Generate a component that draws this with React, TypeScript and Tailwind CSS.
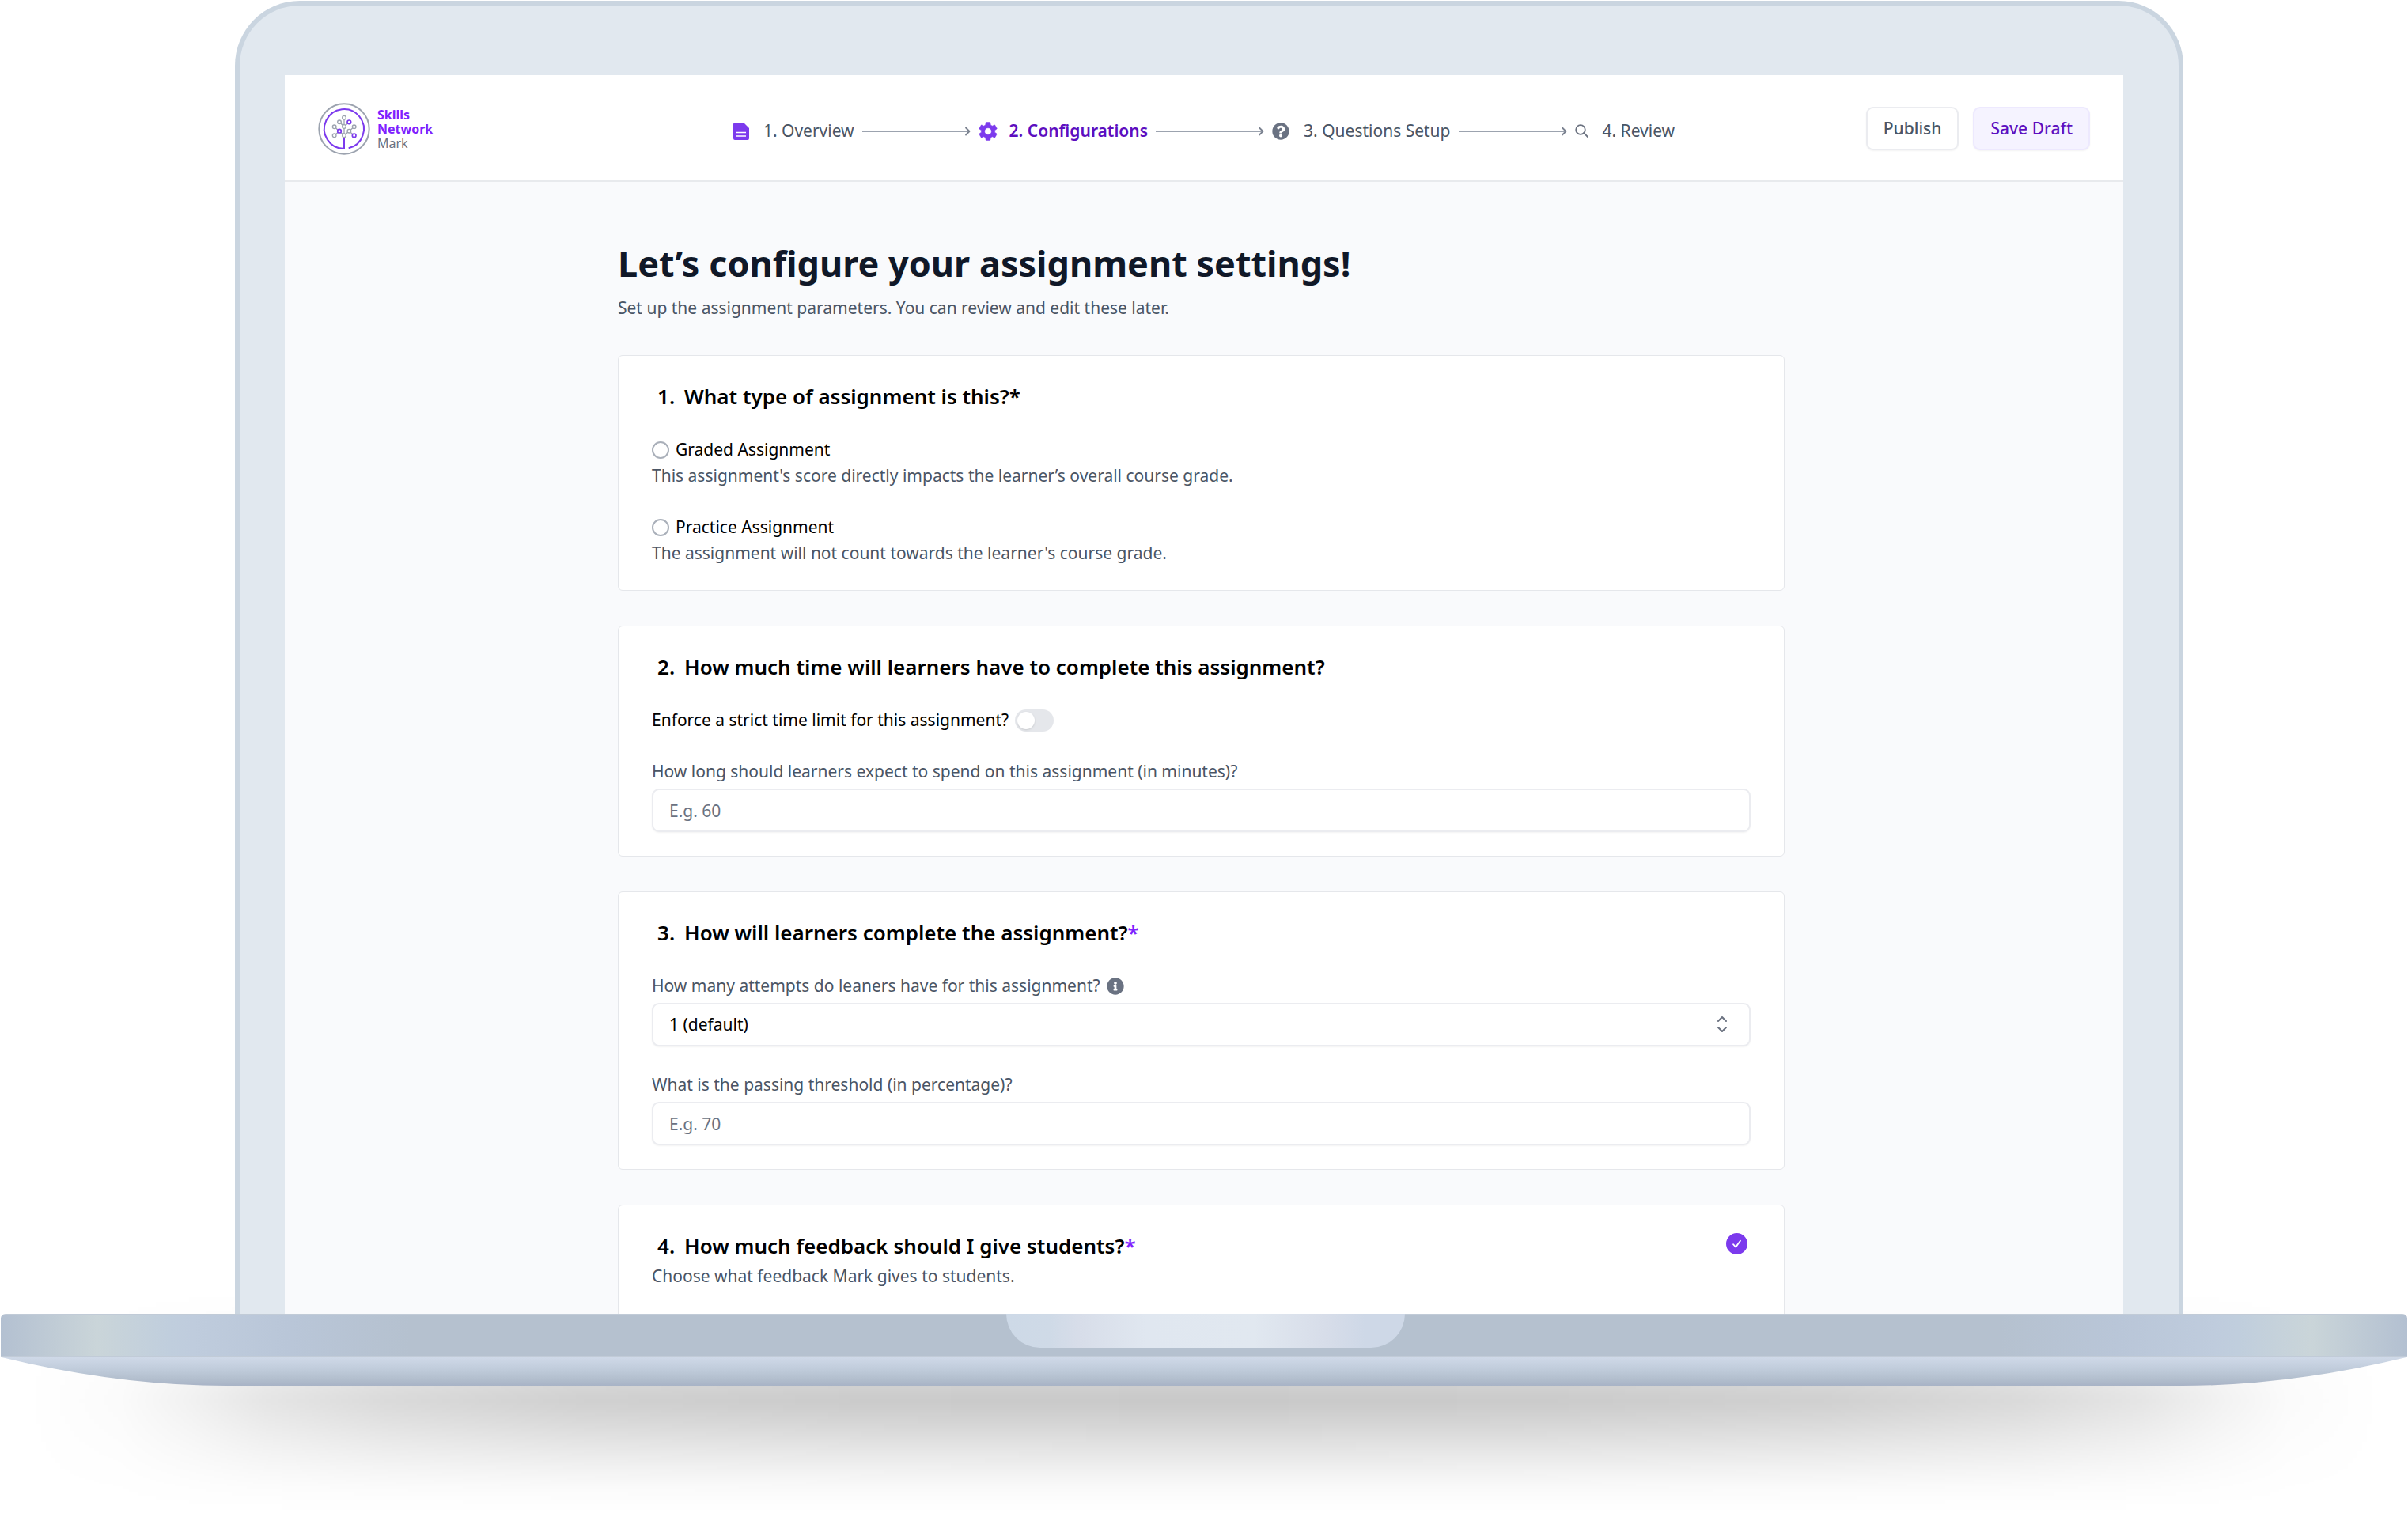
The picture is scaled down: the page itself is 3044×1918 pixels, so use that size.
import React, { useState } from "react";
import { FaInfoCircle, FaQuestionCircle } from "react-icons/fa";

const PURPLE = "#7c3aed";
const GRAY = "#9ca3af";

function Logo() {
  const grayNodes = [
    [464, 443],
    [446, 460],
    [427, 478],
    [464, 477],
    [502, 478],
    [483, 494],
    [427, 511],
    [464, 511],
  ];
  const purpleNodes = [
    [483, 460],
    [446, 494],
    [502, 511],
  ];
  return (
    <a href="#home" className="flex items-center gap-[9px]">
      <svg viewBox="365 387 198 198" className="size-[66px]" fill="none" aria-hidden="true">
        <circle cx="464" cy="486" r="95" stroke={GRAY} strokeWidth="6" />
        <path d="M464 516V561A75 75 0 1 1 481 559" stroke={PURPLE} strokeWidth="6" />
        <path
          d="M464 443V511M446 460L464 477L483 460M427 478L464 511L502 478M427 511L446 494M483 494L502 511"
          stroke={GRAY}
          strokeWidth="4"
        />
        {grayNodes.map(([x, y]) => (
          <circle key={`${x}-${y}`} cx={x} cy={y} r="7" fill="#fff" stroke={GRAY} strokeWidth="4" />
        ))}
        {purpleNodes.map(([x, y]) => (
          <circle key={`${x}-${y}`} cx={x} cy={y} r="7" fill="#fff" stroke={PURPLE} strokeWidth="5" />
        ))}
      </svg>
      <span className="flex flex-col text-[16px] leading-[18px]">
        <span className="font-bold text-violet-600">Skills</span>
        <span className="font-bold text-violet-600">Network</span>
        <span className="text-gray-500">Mark</span>
      </span>
    </a>
  );
}

function DocumentIcon() {
  return (
    <svg viewBox="0 0 20 22" className="h-[22px] w-[20px]" aria-hidden="true">
      <path d="M2 0H13L20 7V20A2 2 0 0 1 18 22H2A2 2 0 0 1 0 20V2A2 2 0 0 1 2 0Z" fill={PURPLE} />
      <path d="M4 12.5H16M4 17H16" stroke="#fff" strokeWidth="1.6" />
    </svg>
  );
}

function GearIcon() {
  return (
    <svg viewBox="2 2 20 20" className="size-[24px]" fill={PURPLE} aria-hidden="true">
      <path
        d="M19.14 12.94c.04-.3.06-.61.06-.94 0-.32-.02-.64-.07-.94l2.03-1.58a.49.49 0 0 0 .12-.61l-1.92-3.32a.488.488 0 0 0-.59-.22l-2.39.96c-.5-.38-1.03-.7-1.62-.94l-.36-2.54a.484.484 0 0 0-.48-.41h-3.84c-.24 0-.43.17-.47.41l-.36 2.54c-.59.24-1.13.57-1.62.94l-2.39-.96c-.22-.08-.47 0-.59.22L2.74 8.87c-.12.21-.08.47.12.61l2.03 1.58c-.05.3-.09.63-.09.94s.02.64.07.94l-2.03 1.58a.49.49 0 0 0-.12.61l1.92 3.32c.12.22.37.29.59.22l2.39-.96c.5.38 1.03.7 1.62.94l.36 2.54c.05.24.24.41.48.41h3.84c.24 0 .44-.17.47-.41l.36-2.54c.59-.24 1.13-.56 1.62-.94l2.39.96c.22.08.47 0 .59-.22l1.92-3.32c.12-.22.07-.47-.12-.61l-2.01-1.58zM12 15.6A3.6 3.6 0 1 1 12 8.4a3.6 3.6 0 0 1 0 7.2z"
        stroke={PURPLE}
        strokeWidth="0.4"
      />
    </svg>
  );
}

function SearchIcon() {
  return (
    <svg viewBox="0 0 17 17" className="size-[17px]" fill="none" stroke="#6b7280" strokeWidth="1.8" strokeLinecap="round" aria-hidden="true">
      <circle cx="7" cy="7" r="5.8" />
      <path d="M11.2 11.2L16 16" />
    </svg>
  );
}

function StepArrow() {
  return (
    <svg viewBox="0 0 137 12" className="h-[12px] w-[137px]" fill="none" stroke="#9ca3af" aria-hidden="true">
      <path d="M0 6H135" strokeWidth="2" />
      <path d="M131 1.5L135.5 6L131 10.5" stroke="#7b8290" strokeWidth="1.8" strokeLinecap="round" strokeLinejoin="round" />
    </svg>
  );
}

const steps = [
  { label: "1. Overview", icon: <DocumentIcon />, gap: "gap-[18px]" },
  { label: "2. Configurations", icon: <GearIcon />, gap: "gap-[15px]" },
  { label: "3. Questions Setup", icon: <FaQuestionCircle className="size-[22px] text-gray-500" aria-hidden="true" />, gap: "gap-[18px]" },
  { label: "4. Review", icon: <SearchIcon />, gap: "gap-[18px]" },
];

function Stepper() {
  return (
    <nav aria-label="Assignment steps" className="pt-[6px]">
      <ol className="flex items-center gap-[10px]">
        {steps.map((step, i) => (
          <li key={step.label} className="flex items-center gap-[10px]">
            <a
              href={`#step-${i + 1}`}
              aria-current={i === 1 ? "step" : undefined}
              className={`flex items-center whitespace-nowrap ${step.gap} ${i === 1 ? "font-semibold text-violet-800" : "text-gray-600"}`}
            >
              {step.icon}
              {step.label}
            </a>
            {i < steps.length - 1 && <StepArrow />}
          </li>
        ))}
      </ol>
    </nav>
  );
}

function Header() {
  return (
    <header className="grid h-[135px] shrink-0 grid-cols-[1fr_auto_1fr] items-center border-b-2 border-[#e8eaed] bg-white px-[42px] pt-[2px]">
      <Logo />
      <Stepper />
      <div className="flex justify-end gap-[18px] font-medium">
        <button type="button" className="h-[55px] rounded-[9px] border-2 border-[#ebecf0] bg-white px-5 text-gray-600 shadow-xs">
          Publish
        </button>
        <button type="button" className="h-[55px] rounded-[9px] border-2 border-violet-100 bg-violet-50 px-5 text-violet-800 shadow-xs">
          Save Draft
        </button>
      </div>
    </header>
  );
}

function Card({
  number,
  title,
  mark,
  done,
  children,
}: {
  number: number;
  title: string;
  mark?: boolean;
  done?: boolean;
  children: React.ReactNode;
}) {
  return (
    <section className="rounded-[6px] border border-gray-200 bg-white px-[42px] pt-[31px] pb-[30px]">
      <div className="flex items-start justify-between">
        <h2 className="flex pl-[7px] text-[26px] leading-10 font-semibold text-black">
          <span className="w-[34px]">{number}.</span>
          <span>
            {title}
            {mark && <span className="text-violet-600">*</span>}
          </span>
        </h2>
        {done && (
          <svg viewBox="0 0 27 27" className="mt-1 mr-1 size-[27px]" role="img" aria-label="Completed">
            <circle cx="13.5" cy="13.5" r="13.5" fill={PURPLE} />
            <path d="M9 14.2L12.2 17.6L18 9.8" fill="none" stroke="#fff" strokeWidth="1.8" strokeLinecap="round" strokeLinejoin="round" />
          </svg>
        )}
      </div>
      {children}
    </section>
  );
}

function TypeOption({
  value,
  label,
  description,
  selected,
  onSelect,
}: {
  value: string;
  label: string;
  description: string;
  selected: string;
  onSelect: (v: string) => void;
}) {
  return (
    <div className="text-gray-600">
      <label className="flex items-center gap-2 text-black">
        <input
          type="radio"
          name="assignment-type"
          value={value}
          checked={selected === value}
          onChange={() => onSelect(value)}
          className="size-[22px] appearance-none rounded-full border-2 border-[#a9afb9] bg-white checked:border-[6px] checked:border-violet-600"
        />
        {label}
      </label>
      <p>{description}</p>
    </div>
  );
}

const fieldClass =
  "mt-[5px] block h-[55px] w-full appearance-none rounded-[9px] border-2 border-[#ebecf0] bg-white px-5 text-[21px] shadow-xs placeholder:text-gray-500";

function Configurations() {
  const [type, setType] = useState("");
  const [strict, setStrict] = useState(false);
  return (
    <main className="flex-1 bg-[#f9fafc] pt-[76px] pr-[11px] pl-1">
      <div className="mx-auto max-w-[1475px]">
        <h1 className="text-[45px] leading-[54px] font-bold text-gray-900">
          Let’s configure your assignment settings!
        </h1>
        <p className="mt-[13px] text-gray-600">
          Set up the assignment parameters. You can review and edit these later.
        </p>

        <div className="mt-[43px] flex flex-col gap-[44px]">
          <Card number={1} title="What type of assignment is this?*">
            <div className="mt-[31px] flex flex-col gap-8">
              <TypeOption
                value="graded"
                label="Graded Assignment"
                description="This assignment's score directly impacts the learner’s overall course grade."
                selected={type}
                onSelect={setType}
              />
              <TypeOption
                value="practice"
                label="Practice Assignment"
                description="The assignment will not count towards the learner's course grade."
                selected={type}
                onSelect={setType}
              />
            </div>
          </Card>

          <Card number={2} title="How much time will learners have to complete this assignment?">
            <label className="mt-[31px] flex w-fit items-center gap-2 text-black">
              Enforce a strict time limit for this assignment?
              <input
                type="checkbox"
                role="switch"
                checked={strict}
                onChange={(e) => setStrict(e.target.checked)}
                className="flex h-[28px] w-[49px] appearance-none items-center rounded-full bg-gray-200 px-[3px] before:size-[22px] before:rounded-full before:bg-white before:shadow-sm checked:justify-end checked:bg-violet-600"
              />
            </label>
            <label htmlFor="duration" className="mt-8 block text-gray-600">
              How long should learners expect to spend on this assignment (in minutes)?
            </label>
            <input id="duration" type="text" inputMode="numeric" placeholder="E.g. 60" className={fieldClass} />
          </Card>

          <Card number={3} title="How will learners complete the assignment?" mark>
            <div className="mt-[31px] flex items-center gap-2 text-gray-600">
              <label htmlFor="attempts">How many attempts do leaners have for this assignment?</label>
              <FaInfoCircle className="size-[22px] text-gray-500" aria-hidden="true" />
            </div>
            <div className="relative">
              <select id="attempts" defaultValue="1" className={fieldClass}>
                <option value="1">1 (default)</option>
                <option value="2">2</option>
                <option value="3">3</option>
              </select>
              <svg
                viewBox="0 0 12 20"
                className="pointer-events-none absolute top-[17px] right-[30px] h-[20px] w-[12px]"
                fill="none"
                stroke="#6b7280"
                strokeWidth="2"
                strokeLinecap="round"
                strokeLinejoin="round"
                aria-hidden="true"
              >
                <path d="M1 6L6 1L11 6M1 14L6 19L11 14" />
              </svg>
            </div>
            <label htmlFor="threshold" className="mt-8 block text-gray-600">
              What is the passing threshold (in percentage)?
            </label>
            <input id="threshold" type="text" inputMode="numeric" placeholder="E.g. 70" className={fieldClass} />
          </Card>

          <Card number={4} title="How much feedback should I give students?" mark done>
            <p className="mt-[2px] pb-10 text-gray-600">Choose what feedback Mark gives to students.</p>
          </Card>
        </div>
      </div>
    </main>
  );
}

function LaptopBase() {
  return (
    <div className="relative h-[257px] shrink-0" aria-hidden="true">
      <div className="absolute inset-x-0 -top-[30px] h-[282px] bg-[linear-gradient(180deg,rgb(0_0_0/0)_0px,rgb(0_0_0/0.02)_30px,rgb(0_0_0/0.188)_121px,rgb(0_0_0/0.208)_134px,rgb(0_0_0/0.21)_142px,rgb(0_0_0/0.198)_153px,rgb(0_0_0/0.169)_169px,rgb(0_0_0/0.13)_189px,rgb(0_0_0/0.09)_209px,rgb(0_0_0/0.055)_229px,rgb(0_0_0/0.024)_249px,rgb(0_0_0/0.006)_267px,rgb(0_0_0/0)_282px)] [mask-image:linear-gradient(90deg,transparent_1%,rgb(0_0_0/0.08)_5%,rgb(0_0_0/0.26)_8%,rgb(0_0_0/0.47)_11%,rgb(0_0_0/0.68)_16%,rgb(0_0_0/0.86)_24%,rgb(0_0_0/0.96)_36%,black_50%,rgb(0_0_0/0.96)_64%,rgb(0_0_0/0.86)_76%,rgb(0_0_0/0.68)_84%,rgb(0_0_0/0.47)_89%,rgb(0_0_0/0.26)_92%,rgb(0_0_0/0.08)_95%,transparent_99%)]" />
      <div className="relative mx-px flex h-[55px] justify-center rounded-t-[6px] border-y border-[#c1cbd7] bg-[linear-gradient(90deg,#b3c0d1_0%,#cad5d9_4%,#c0cedd_7%,#bfccdd_8%,#b9c6d8_12%,#b5c1cf_17%,#b5c1cf_83%,#b9c6d8_88%,#bfccdd_92%,#c0cedd_93%,#cad5d9_96%,#b3c0d1_100%)] pl-[3px]">
        <div className="-mt-px h-[43px] w-[504px] rounded-b-[43px] bg-[linear-gradient(90deg,#cdd9e7_0%,#cfdae7_11%,#d7dde9_18%,#e0e7f0_35%,#e1e8f0_62%,#d7dde9_80%,#ced8e7_90%,#ced8e7_100%)]" />
      </div>
      <svg viewBox="0 0 3044 36" preserveAspectRatio="none" className="relative block h-[36px] w-full">
        <defs>
          <linearGradient id="underside" x1="0" y1="0" x2="0" y2="1">
            <stop offset="0" stopColor="#cfd9e8" />
            <stop offset="0.5" stopColor="#bdc9d8" />
            <stop offset="0.75" stopColor="#b3bfce" />
            <stop offset="1" stopColor="#a8b3c6" />
          </linearGradient>
        </defs>
        <path d="M2 0Q150 36 286 36H2758Q2894 36 3042 0Z" fill="url(#underside)" />
      </svg>
    </div>
  );
}

export default function App() {
  return (
    <div className="flex h-screen flex-col overflow-hidden bg-white pt-px font-['Noto_Sans',sans-serif] text-[21px] leading-[33px]">
      <div className="relative z-10 mr-[284px] ml-[297px] flex min-h-0 flex-1 rounded-t-[82px] border-6 border-b-0 border-[#cad5e0] bg-[#e1e8ef] pt-[88px] pr-[70px] pl-[57px]">
        <div className="flex min-w-0 flex-1 flex-col overflow-hidden">
          <Header />
          <Configurations />
        </div>
      </div>
      <LaptopBase />
    </div>
  );
}
